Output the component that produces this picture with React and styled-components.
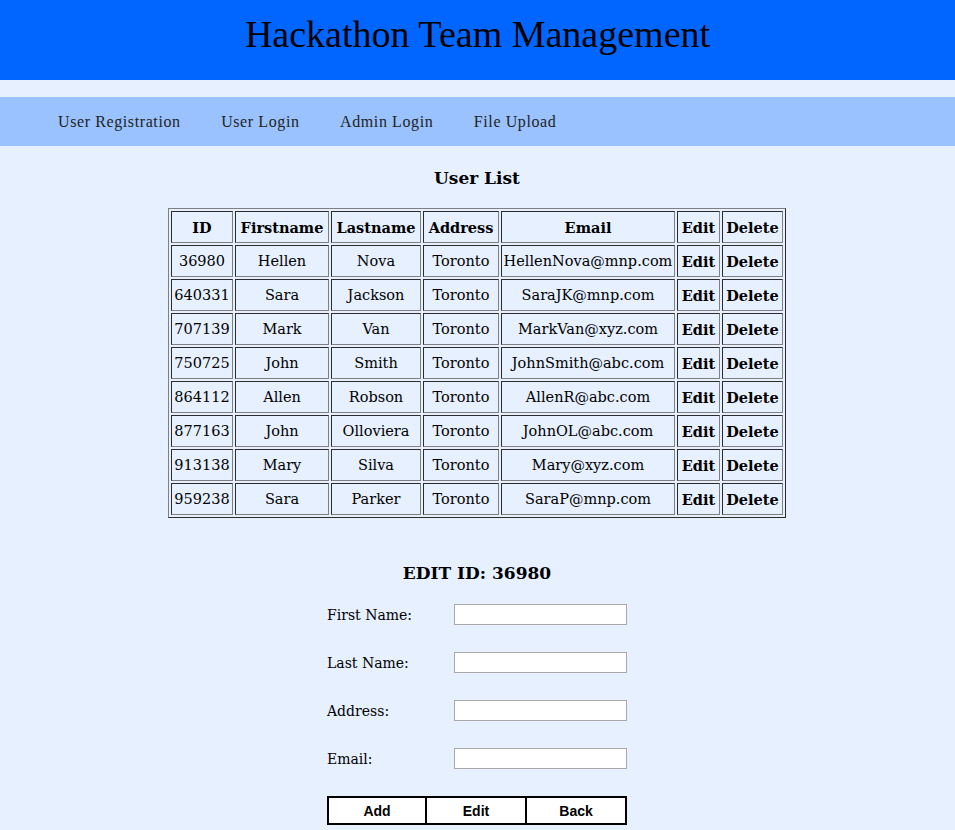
import React from "react";
import styled, { createGlobalStyle } from "styled-components";

const Global = createGlobalStyle`
  * { box-sizing: border-box; }
  html, body { margin: 0; padding: 0; }
  body {
    background: #e6f0ff;
    font-family: "DejaVu Serif", Georgia, serif;
    color: #000;
  }
`;

const Header = styled.header`
  background: #0066ff;
  height: 80px;
  display: flex;
  justify-content: center;
  padding-top: 12px;
`;

const Title = styled.h1`
  margin: 0;
  font-family: "Liberation Serif", "Times New Roman", serif;
  font-weight: normal;
  font-size: 38px;
  line-height: 44px;
`;

const Nav = styled.nav`
  margin-top: 17px;
  background: #99c2ff;
  height: 49px;
  display: flex;
  align-items: center;
  padding-left: 58px;
  gap: 40.5px;
`;

const NavLink = styled.a`
  font-family: "Liberation Serif", "Times New Roman", serif;
  font-size: 16px;
  letter-spacing: 0.6px;
  color: #222;
  text-decoration: none;
  cursor: pointer;
`;

const Main = styled.main`
  display: flex;
  flex-direction: column;
  align-items: center;
  padding-right: 1px;
`;

const Heading = styled.h3`
  font-size: 17px;
  font-weight: bold;
  margin: ${(p) => p.$mt || 0}px 0 ${(p) => p.$mb || 0}px;
  line-height: 22px;
`;

const Table = styled.table`
  border: 1px outset grey;
  border-spacing: 2px;
  table-layout: fixed;
  width: 618px;
`;

const Th = styled.th`
  border: 1px inset grey;
  height: 32px;
  padding: 0;
  font-size: 14.5px;
  font-weight: bold;
  text-align: center;
  width: ${(p) => p.$w}px;
`;

const Td = styled.td`
  border: 1px inset grey;
  height: 32px;
  padding: 0;
  font-size: 14.5px;
  font-weight: ${(p) => (p.$bold ? "bold" : "normal")};
  text-align: center;
  white-space: nowrap;
`;

const Form = styled.form`
  width: 300px;
  display: flex;
  flex-direction: column;
  gap: 27px;
`;

const Row = styled.div`
  display: grid;
  grid-template-columns: 127px 173px;
  align-items: center;
  height: 21px;
`;

const Label = styled.label`
  font-family: "DejaVu Serif", Georgia, serif;
  font-size: 14px;
`;

const Input = styled.input`
  width: 173px;
  height: 21px;
  border: 1px solid #a9a9a9;
  background: #fff;
  padding: 1px 2px;
  margin: 0;
`;

const Buttons = styled.div`
  display: flex;
`;

const Button = styled.button`
  width: ${(p) => (p.$first ? 100 : 102)}px;
  margin-left: ${(p) => (p.$first ? 0 : -2)}px;
  height: 29px;
  background: #fff;
  border: 2px solid #000;
  font-family: "Liberation Sans", Arial, sans-serif;
  font-weight: bold;
  font-size: 14px;
  color: #000;
  padding: 0;
  cursor: pointer;
`;

const users = [
  ["36980", "Hellen", "Nova", "Toronto", "HellenNova@mnp.com"],
  ["640331", "Sara", "Jackson", "Toronto", "SaraJK@mnp.com"],
  ["707139", "Mark", "Van", "Toronto", "MarkVan@xyz.com"],
  ["750725", "John", "Smith", "Toronto", "JohnSmith@abc.com"],
  ["864112", "Allen", "Robson", "Toronto", "AllenR@abc.com"],
  ["877163", "John", "Olloviera", "Toronto", "JohnOL@abc.com"],
  ["913138", "Mary", "Silva", "Toronto", "Mary@xyz.com"],
  ["959238", "Sara", "Parker", "Toronto", "SaraP@mnp.com"],
];

const cols = [
  ["ID", 62],
  ["Firstname", 94],
  ["Lastname", 90],
  ["Address", 76],
  ["Email", 174],
  ["Edit", 43],
  ["Delete", 61],
];

export default function App() {
  return (
    <>
      <Global />
      <Header>
        <Title>Hackathon Team Management</Title>
      </Header>
      <Nav>
        <NavLink>User Registration</NavLink>
        <NavLink>User Login</NavLink>
        <NavLink>Admin Login</NavLink>
        <NavLink>File Upload</NavLink>
      </Nav>
      <Main>
        <Heading $mt={21} $mb={19}>User List</Heading>
        <Table>
          <thead>
            <tr>
              {cols.map(([c, w]) => (
                <Th key={c} $w={w}>{c}</Th>
              ))}
            </tr>
          </thead>
          <tbody>
            {users.map((u) => (
              <tr key={u[0]}>
                {u.map((v, i) => (
                  <Td key={i}>{v}</Td>
                ))}
                <Td $bold>Edit</Td>
                <Td $bold>Delete</Td>
              </tr>
            ))}
          </tbody>
        </Table>
        <Heading $mt={44} $mb={20}>EDIT ID: 36980</Heading>
        <Form onSubmit={(e) => e.preventDefault()}>
          <Row>
            <Label>First Name:</Label>
            <Input />
          </Row>
          <Row>
            <Label>Last Name:</Label>
            <Input />
          </Row>
          <Row>
            <Label>Address:</Label>
            <Input />
          </Row>
          <Row>
            <Label>Email:</Label>
            <Input />
          </Row>
          <Buttons>
            <Button $first type="button">Add</Button>
            <Button type="button">Edit</Button>
            <Button type="button">Back</Button>
          </Buttons>
        </Form>
      </Main>
    </>
  );
}
